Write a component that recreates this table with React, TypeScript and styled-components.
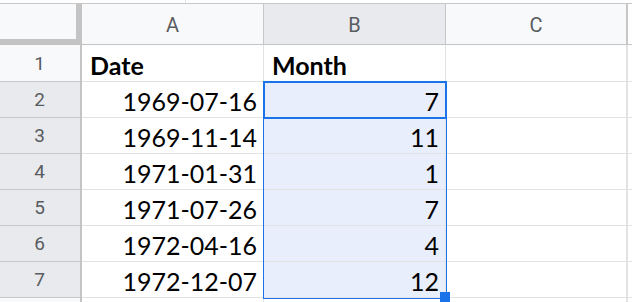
import React from "react";
import styled, { createGlobalStyle } from "styled-components";

const Global = createGlobalStyle`
  html, body { margin: 0; padding: 0; background: #ffffff; }
  body { width: 632px; height: 302px; overflow: hidden; }
`;

const Page = styled.div`
  position: relative;
  width: 632px;
  height: 302px;
  overflow: hidden;
  background: #fff;
`;

const TopGap = styled.div`
  height: 3px;
  display: flex;
`;

const Tick = styled.div<{ $left: number }>`
  margin-left: ${(p) => p.$left}px;
  width: 1px;
  background: #e3e3e3;
`;

const Sheet = styled.div`
  display: grid;
  grid-template-columns: 82px 182px 182px 182px 1fr;
  grid-template-rows: 41px 37px repeat(7, 36px);
  border-top: 1px solid #c7c7c7;
`;

const Corner = styled.div`
  box-sizing: border-box;
  background: #f8f9fa;
  border-right: 6px solid #c4c4c4;
  border-bottom: 6px solid #c4c4c4;
`;

const ColHead = styled.div<{ $selected?: boolean; $last?: boolean }>`
  box-sizing: border-box;
  display: flex;
  align-items: center;
  justify-content: center;
  background: ${(p) => (p.$selected ? "#e8eaed" : "#f8f9fa")};
  border-right: ${(p) => (p.$last ? "2px" : "1px")} solid #c7c7c7;
  border-bottom: 1px solid #c4c4c4;
  color: #595c60;
  font-family: Roboto, "Liberation Sans", sans-serif;
  font-size: 20px;
  padding-top: 1px;
`;

const HeadFiller = styled.div`
  box-sizing: border-box;
  background: #fff;
  border-bottom: 1px solid #c4c4c4;
`;

const RowHead = styled.div<{ $selected?: boolean }>`
  box-sizing: border-box;
  display: flex;
  align-items: center;
  justify-content: center;
  background: ${(p) => (p.$selected ? "#e8eaed" : "#f8f9fa")};
  border-right: 2px solid #c4c4c4;
  border-bottom: 1px solid #c7c7c7;
  color: #595c60;
  font-family: Roboto, "Liberation Sans", sans-serif;
  font-size: 19px;
  padding-right: 1px;
`;

const Cell = styled.div<{
  $align?: "left" | "right";
  $bold?: boolean;
  $selected?: boolean;
  $last?: boolean;
}>`
  box-sizing: border-box;
  display: flex;
  align-items: flex-end;
  justify-content: ${(p) => (p.$align === "right" ? "flex-end" : "flex-start")};
  padding: 0 6px 1px 8px;
  background: ${(p) => (p.$selected ? "#e8eefb" : "#fff")};
  border-right: ${(p) => (p.$last ? "2px" : "1px")} solid #e2e3e3;
  border-bottom: 1px solid #e2e3e3;
  color: #000;
  font-family: Lato, "Noto Sans", sans-serif;
  font-size: 25px;
  font-weight: ${(p) => (p.$bold ? 700 : 400)};
  white-space: nowrap;
  overflow: hidden;
`;

const Filler = styled.div`
  box-sizing: border-box;
  background: #fff;
  border-bottom: 1px solid #e2e3e3;
`;

const RangeBox = styled.div`
  position: absolute;
  left: 263px;
  top: 81px;
  width: 184px;
  height: 218px;
  box-sizing: border-box;
  border: 1px solid #1a73e8;
  pointer-events: none;
`;

const ActiveBox = styled.div`
  position: absolute;
  left: 263px;
  top: 81px;
  width: 184px;
  height: 38px;
  box-sizing: border-box;
  border: 2px solid #1a73e8;
  pointer-events: none;
`;

const FillHandle = styled.div`
  position: absolute;
  left: 440px;
  top: 292px;
  width: 10px;
  height: 10px;
  background: #1a73e8;
`;

const rows: { date: string; month: string }[] = [
  { date: "1969-07-16", month: "7" },
  { date: "1969-11-14", month: "11" },
  { date: "1971-01-31", month: "1" },
  { date: "1971-07-26", month: "7" },
  { date: "1972-04-16", month: "4" },
  { date: "1972-12-07", month: "12" },
];

export default function App() {
  return (
    <Page>
      <Global />
      <TopGap>
        <Tick $left={185} />
      </TopGap>
      <Sheet>
        <Corner />
        <ColHead>A</ColHead>
        <ColHead $selected>B</ColHead>
        <ColHead $last>C</ColHead>
        <HeadFiller />

        <RowHead>1</RowHead>
        <Cell $bold>Date</Cell>
        <Cell $bold>Month</Cell>
        <Cell $last />
        <Filler />

        {rows.map((r, i) => (
          <React.Fragment key={r.date}>
            <RowHead $selected>{i + 2}</RowHead>
            <Cell $align="right">{r.date}</Cell>
            <Cell $align="right" $selected>
              {r.month}
            </Cell>
            <Cell $last />
            <Filler />
          </React.Fragment>
        ))}

        <RowHead />
        <Cell />
        <Cell />
        <Cell $last />
        <Filler />
      </Sheet>
      <RangeBox />
      <ActiveBox />
      <FillHandle />
    </Page>
  );
}
